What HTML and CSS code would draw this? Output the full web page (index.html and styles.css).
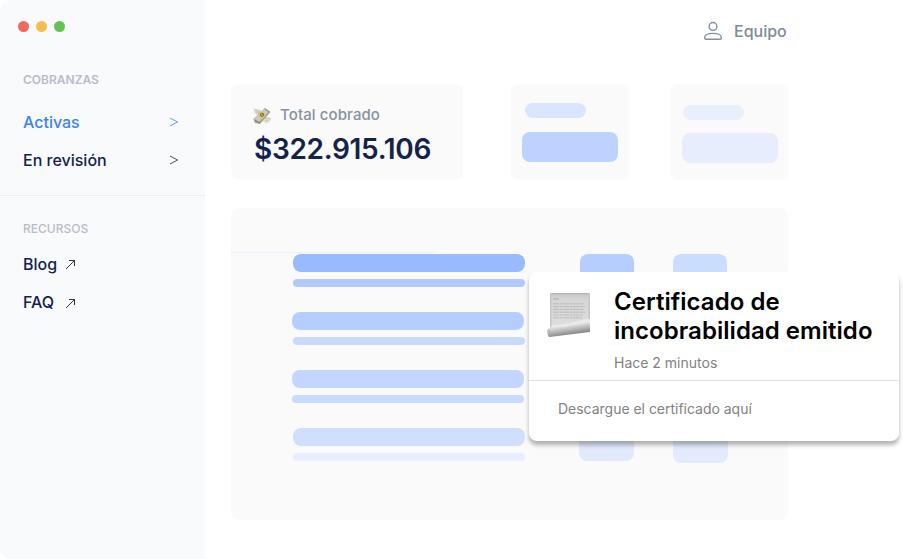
FILE: index.html
```html
<!DOCTYPE html>
<html lang="es">
<head>
<meta charset="utf-8">
<title>Cobranzas</title>
<link rel="stylesheet" href="styles.css">
</head>
<body>
<div class="window">
  <aside class="sidebar">
    <div class="controls"><i class="dot red"></i><i class="dot yellow"></i><i class="dot green"></i></div>
    <nav class="group billing">
      <h2>COBRANZAS</h2>
      <a class="link active"><span>Activas</span><svg class="chevron" viewBox="0 0 10 10"><path d="M1 1 8.6 5 1 9"/></svg></a>
      <a class="link"><span>En revisión</span><svg class="chevron" viewBox="0 0 10 10"><path d="M1 1 8.6 5 1 9"/></svg></a>
    </nav>
    <nav class="group resources">
      <h2>RECURSOS</h2>
      <a class="link external"><span class="name">Blog</span><svg class="arrow" viewBox="0 0 11 11"><path d="M1 10 9.5 1.5M4 1.5h5.5v5.5"/></svg></a>
      <a class="link external"><span class="name">FAQ</span><svg class="arrow lower" viewBox="0 0 11 11"><path d="M1 10 9.5 1.5M4 1.5h5.5v5.5"/></svg></a>
    </nav>
  </aside>
  <main class="main">
    <header class="topbar">
      <svg class="user" viewBox="0 0 20 20"><circle cx="10" cy="5.4" r="3.9"/><path d="M1.7 16.4c0-2.5 3.7-4 8.3-4s8.3 1.5 8.3 4c0 1.4-.8 1.9-2.2 1.9H3.9c-1.4 0-2.2-.5-2.2-1.9Z"/></svg>
      <span>Equipo</span>
    </header>
    <section class="stats">
      <div class="card total">
        <div class="label">
          <svg class="money" viewBox="0 0 19 18">
            <path d="M.5 1.5 8 3 8 8 4 8 1.5 6Z" fill="#d9dbcb"/><path d="m2 3 5 2M3 5l4 1" stroke="#b9bcac" stroke-width=".7"/>
            <path d="m11 9 7.5 2-1.5 3.5-4 2-4-3Z" fill="#deded0"/><path d="m12 11 5 1m-5 1 3 1" stroke="#bec0b3" stroke-width=".7"/>
            <path d="m.5 12 11.5-11 5.5 4L7 17 2 16Z" fill="#a3a18e"/>
            <path d="m.5 12 11.5-11 4.5 3L6 15Z" fill="#cbc9b8"/>
            <path d="m5 7 3-3 5 4-3 4Z" fill="#e8bf4e"/>
            <circle cx="9" cy="7.8" r="2.1" fill="#746c45"/><path d="m8 6.4 2 3" stroke="#e7dfb5" stroke-width=".8"/>
            <path d="m2 13 5 3M12 2l4 3" stroke="#777667" stroke-width=".8"/>
          </svg>
          <span>Total cobrado</span>
        </div>
        <strong>$322.915.106</strong>
      </div>
      <div class="card mini first"><i class="pill"></i><i class="block"></i></div>
      <div class="card mini second"><i class="pill"></i><i class="block"></i></div>
    </section>
    <section class="panel">
      <div class="rule"></div>
      <div class="content">
        <div class="rows">
          <div class="row one"><i></i><b></b></div>
          <div class="row two"><i></i><b></b></div>
          <div class="row three"><i></i><b></b></div>
          <div class="row four"><i></i><b></b></div>
        </div>
        <div class="column left"><i></i><b></b></div>
        <div class="column right"><i></i><b></b></div>
      </div>
    </section>
  </main>
  <article class="notice">
    <div class="notice-head">
      <svg class="document" viewBox="0 0 46 46">
        <defs>
          <linearGradient id="paper" x2="0" y2="1"><stop stop-color="#c8c8c8"/><stop offset=".2" stop-color="#d6d6d6"/><stop offset="1" stop-color="#dedede"/></linearGradient>
          <linearGradient id="roll" gradientUnits="userSpaceOnUse" x1="22" y1="33" x2="23.5" y2="43"><stop stop-color="#ededed"/><stop offset=".45" stop-color="#c4c4c4"/><stop offset="1" stop-color="#8d8d8d"/></linearGradient>
        </defs>
        <path d="M4 2h40v28L4 38Z" fill="url(#paper)"/>
        <path d="M4 2h40v1.2H4Z" fill="#b5b5b5"/><path d="M4 2h1.5v35H4M42.5 2H44v28h-1.5Z" fill="#c5c5c5"/>
        <path d="M7 8h6" stroke="#a5a5a5" stroke-width=".8"/>
        <path d="M7 12.8h31M7 15.6h32M7 18.4h31M7 21.2h32M7 24h30M7 26.8h29" stroke="#b4b4b4" stroke-width=".8" stroke-dasharray="6 .6 3 .5"/>
        <path d="M6 34.5c12-1 24-3.500 36-6.800 1.500-.3 2 .3 2 1.800V41L3.500 46C2 46 1 41 1 39.500 1 38 2 37 4 37Z" fill="url(#roll)"/>
        <path d="M6 34.500c12-1 24-3.500 36-6.800L44 31 18 36Z" fill="#e9e9e9"/>
        <path d="M2 38.500c1 0 2 2 2 6.500" fill="none" stroke="#a5a5a5" stroke-width=".7"/>
      </svg>
      <div class="notice-copy">
        <h1><span class="line-one">Certificado de</span><br><span class="line-two">incobrabilidad emitido</span></h1>
        <p>Hace 2 minutos</p>
      </div>
    </div>
    <div class="notice-foot">Descargue el certificado aquí</div>
  </article>
</div>
</body>
</html>
```
FILE: styles.css
```css
* { box-sizing: border-box; }
body { margin: 0; background: #fff; font-family: Inter, "Liberation Sans", sans-serif; }
h1, h2, p { margin: 0; }
i, b { display: block; }
svg { display: block; flex: none; }
.window { position: relative; display: flex; width: 903px; height: 559px; overflow: hidden; }
.sidebar { width: 205px; background: #f9fafc; border-radius: 10px 0 0 10px; }
.controls { display: flex; gap: 7px; padding: 21px 0 0 18px; height: 70px; }
.dot { width: 11px; height: 11px; border-radius: 50%; }
.red { background: #ef6a5e; }
.yellow { background: #f5be4f; }
.green { background: #61c554; }
.group { padding: 0 26px 0 23px; }
.billing { height: 126px; border-bottom: 1px solid #e9edf5; }
.resources { padding-top: 23px; }
h2 { color: #b8bcca; font-size: 12px; line-height: 20px; font-weight: 500; }
.billing h2 { margin-bottom: 13px; font-weight: 600; }
.resources h2 { margin-bottom: 6px; }
.link { display: flex; align-items: center; justify-content: space-between; height: 38px; color: #14234b; font-size: 16px; font-weight: 500; }
.active { color: #3b82f6; }
.chevron { width: 10px; height: 10px; fill: none; stroke: currentColor; stroke-width: .8; }
.external { justify-content: flex-start; }
.name { width: 42px; }
.arrow { width: 11px; height: 11px; fill: none; stroke: #111; stroke-width: .85; }
.lower { margin-top: 2px; }
.main { width: 698px; padding-left: 26px; }
.topbar { display: flex; align-items: center; gap: 11px; height: 84px; padding: 0 0 22px 472px; color: #7d8b9b; font-size: 16px; font-weight: 500; }
.user { width: 20px; height: 20px; fill: none; stroke: #8290a0; stroke-width: 1.4; }
.stats { display: flex; height: 96px; }
.card { border-radius: 8px; background: #fafafa; }
.total { width: 232px; margin-right: 48px; padding: 20px 0 0 22px; }
.label { display: flex; align-items: center; gap: 8px; height: 20px; color: #8492a1; font-size: 15px; font-weight: 500; letter-spacing: .1px; }
.money { width: 19px; height: 18px; margin-top: 4px; }
.total strong { display: block; color: #14234b; font-size: 28px; line-height: 36px; font-weight: 600; letter-spacing: -.32px; margin: 7px 0 0 1px; }
.mini { width: 118px; }
.first { margin-right: 41px; padding: 19px 0 0 11px; }
.second { padding: 21px 0 0 12px; }
.pill { width: 61px; height: 15px; border-radius: 8px; }
.block { width: 96px; height: 30px; border-radius: 8px; }
.first .pill { background: #dae6ff; margin: 0 0 14px 3px; }
.first .block { background: #bed2ff; }
.second .pill { background: #e9effd; margin: 0 0 13px 1px; }
.second .block { background: #e7edfc; }
.panel { width: 557px; height: 312px; margin-top: 28px; border-radius: 8px; background: #fafafa; padding-top: 44px; }
.rule { width: 205px; height: 1px; background: #e8eefb; margin-bottom: 1px; }
.content { display: flex; padding-left: 61px; }
.rows { width: 233px; margin-right: 54px; }
.row { height: 58px; padding-left: 1px; }
.row i { width: 232px; height: 18px; border-radius: 8px; margin-bottom: 7px; }
.row b { width: 232px; height: 8px; border-radius: 4px; }
.one i { background: #99baff; }
.one b { background: #b0caff; }
.two i { background: #b6ceff; margin-left: -1px; }
.two b { background: #c9dbfd; }
.three { padding-left: 0; }
.three i { background: #c3d6ff; }
.three b { background: #c8dafd; }
.four i { background: #d0dffd; }
.four b { background: #e7eefd; }
.column { width: 55px; height: 209px; display: flex; flex-direction: column; justify-content: space-between; }
.left { height: 207px; margin-right: 39px; }
.column i { width: 54px; height: 34px; border-radius: 8px; }
.column b { height: 40px; border-radius: 8px; }
.left i { background: #b6ceff; margin-left: 1px; }
.right i { background: #cbddff; }
.left b { background: #e1e9fd; }
.right b { background: #e3ebfd; }
.notice { position: absolute; left: 529px; top: 272px; width: 370px; height: 169px; border-radius: 8px; background: #fff; box-shadow: 0 4px 4px rgba(0,0,0,.3); }
.notice-head { display: flex; height: 109px; padding: 15px 0 0 17px; border-bottom: 1px solid #e1e1e1; }
.document { width: 46px; height: 46px; margin: 4px 22px 0 0; }
h1 { color: #000; font-size: 24px; line-height: 29px; font-weight: 600; letter-spacing: .04px; white-space: nowrap; }
.notice-copy p { margin-top: 8px; color: #828282; font-size: 14px; line-height: 20px; }
.notice-foot { padding: 18px 0 0 29px; color: #828282; font-size: 14px; line-height: 20px; letter-spacing: -.02px; }
```
